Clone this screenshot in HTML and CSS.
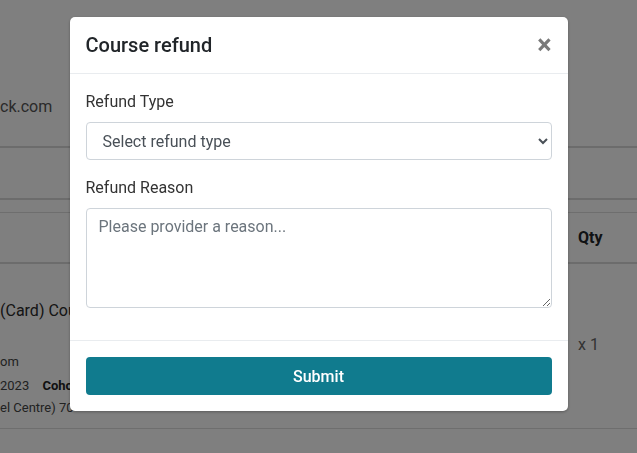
FILE: index.html
```html
<!DOCTYPE html>
<html>
<head>
<meta charset="utf-8">
<link rel="stylesheet" href="styles.css">
</head>
<body>
<div class="page">
  <div class="account">ck.com</div>
  <div class="tabs"></div>
  <div class="spacer"></div>
  <div class="thead">
    <div class="col-main"></div>
    <div class="col-qty">Qty</div>
  </div>
  <div class="trow">
    <div class="col-main">
      <div class="item-title">(Card) Course</div>
      <div class="item-mail">om</div>
      <div class="item-meta">2023 <b class="meta-key">Cohort</b></div>
      <div class="item-meta">el Centre) 70</div>
    </div>
    <div class="col-qty qty-val">x 1</div>
  </div>
</div>

<div class="backdrop">
  <div class="modal">
    <div class="modal-header">
      <h5 class="modal-title">Course refund</h5>
      <button class="close" type="button">×</button>
    </div>
    <div class="modal-body">
      <div class="form-group">
        <label class="label">Refund Type</label>
        <select class="control select">
          <option>Select refund type</option>
        </select>
      </div>
      <div class="form-group">
        <label class="label">Refund Reason</label>
        <textarea class="control textarea" placeholder="Please provider a reason..."></textarea>
      </div>
    </div>
    <div class="modal-footer">
      <button class="submit" type="button">Submit</button>
    </div>
  </div>
</div>
</body>
</html>
```

FILE: styles.css
```css
* { box-sizing: border-box; }
html, body { margin: 0; padding: 0; }
body {
  font-family: Roboto, "Liberation Sans", sans-serif;
  color: #212529;
  background: #fff;
  width: 637px;
  height: 453px;
  overflow: hidden;
}
.page { padding-top: 95px; }
.account {
  font-size: 16px;
  line-height: 24px;
  color: #555;
  height: 53px;
  border-bottom: 2px solid #d8d8d8;
}
.tabs {
  height: 52px;
  border-bottom: 2px solid #d8d8d8;
}
.spacer {
  height: 13px;
  border-bottom: 1px solid #dcdcdc;
}
.thead {
  display: grid;
  grid-template-columns: 578px 1fr;
  height: 51px;
  align-items: center;
  border-bottom: 2px solid #d8d8d8;
}
.col-qty { font-size: 16px; }
.thead .col-qty { font-weight: 700; color: #212529; }
.trow {
  display: grid;
  grid-template-columns: 578px 1fr;
  align-items: center;
  height: 165px;
  border-bottom: 1px solid #dcdcdc;
}
.trow .col-main { padding-top: 35px; align-self: start; }
.item-title { font-size: 16px; line-height: 24px; font-weight: 400; color: #2a2a2a; margin-bottom: 28px; }
.item-mail, .item-meta { font-size: 13px; line-height: 22px; color: #444; }
.item-mail { margin-bottom: 2px; }
.meta-key { margin-left: 10px; font-weight: 700; color: #222; }
.qty-val { color: #666; padding-bottom: 4px; }

.backdrop {
  position: fixed;
  inset: 0;
  background: rgba(0, 0, 0, 0.5);
  display: flex;
  justify-content: center;
  align-items: flex-start;
}
.modal {
  margin-top: 17px;
  width: 498px;
  background: #fff;
  border-radius: 5px;
  box-shadow: 0 1px 3px rgba(0,0,0,0.3);
}
.modal-header {
  display: flex;
  align-items: center;
  justify-content: space-between;
  padding: 16px 16px;
  height: 57px;
  border-bottom: 1px solid #e9ecef;
}
.modal-title {
  margin: 0;
  font-size: 20px;
  line-height: 24px;
  font-weight: 500;
  color: #212529;
}
.close {
  border: 0;
  background: none;
  padding: 0;
  margin-right: 0;
  font-family: Roboto, "Liberation Sans", sans-serif;
  font-size: 27px;
  line-height: 24px;
  font-weight: 700;
  color: #7a7a7a;
}
.modal-body { padding: 16px; }
.form-group { margin-bottom: 16px; }
.label {
  display: block;
  font-size: 16px;
  line-height: 24px;
  color: #333;
  margin-bottom: 8px;
}
.control {
  display: block;
  width: 100%;
  font-family: Roboto, "Liberation Sans", sans-serif;
  font-size: 16px;
  border: 1px solid #ced4da;
  border-radius: 4px;
  background: #fff;
  color: #495057;
}
.select {
  height: 38px;
  padding: 6px 12px;
}
.textarea {
  height: 100px;
  padding: 6px 12px;
  line-height: 24px;
  resize: vertical;
}
.textarea::placeholder { color: #6c757d; }
.modal-footer {
  padding: 16px;
  border-top: 1px solid #e9ecef;
}
.submit {
  display: block;
  width: 100%;
  height: 38px;
  border: 0;
  border-radius: 4px;
  background: #107b8e;
  color: #fff;
  font-family: Roboto, "Liberation Sans", sans-serif;
  font-size: 16px;
  font-weight: 500;
}
```
